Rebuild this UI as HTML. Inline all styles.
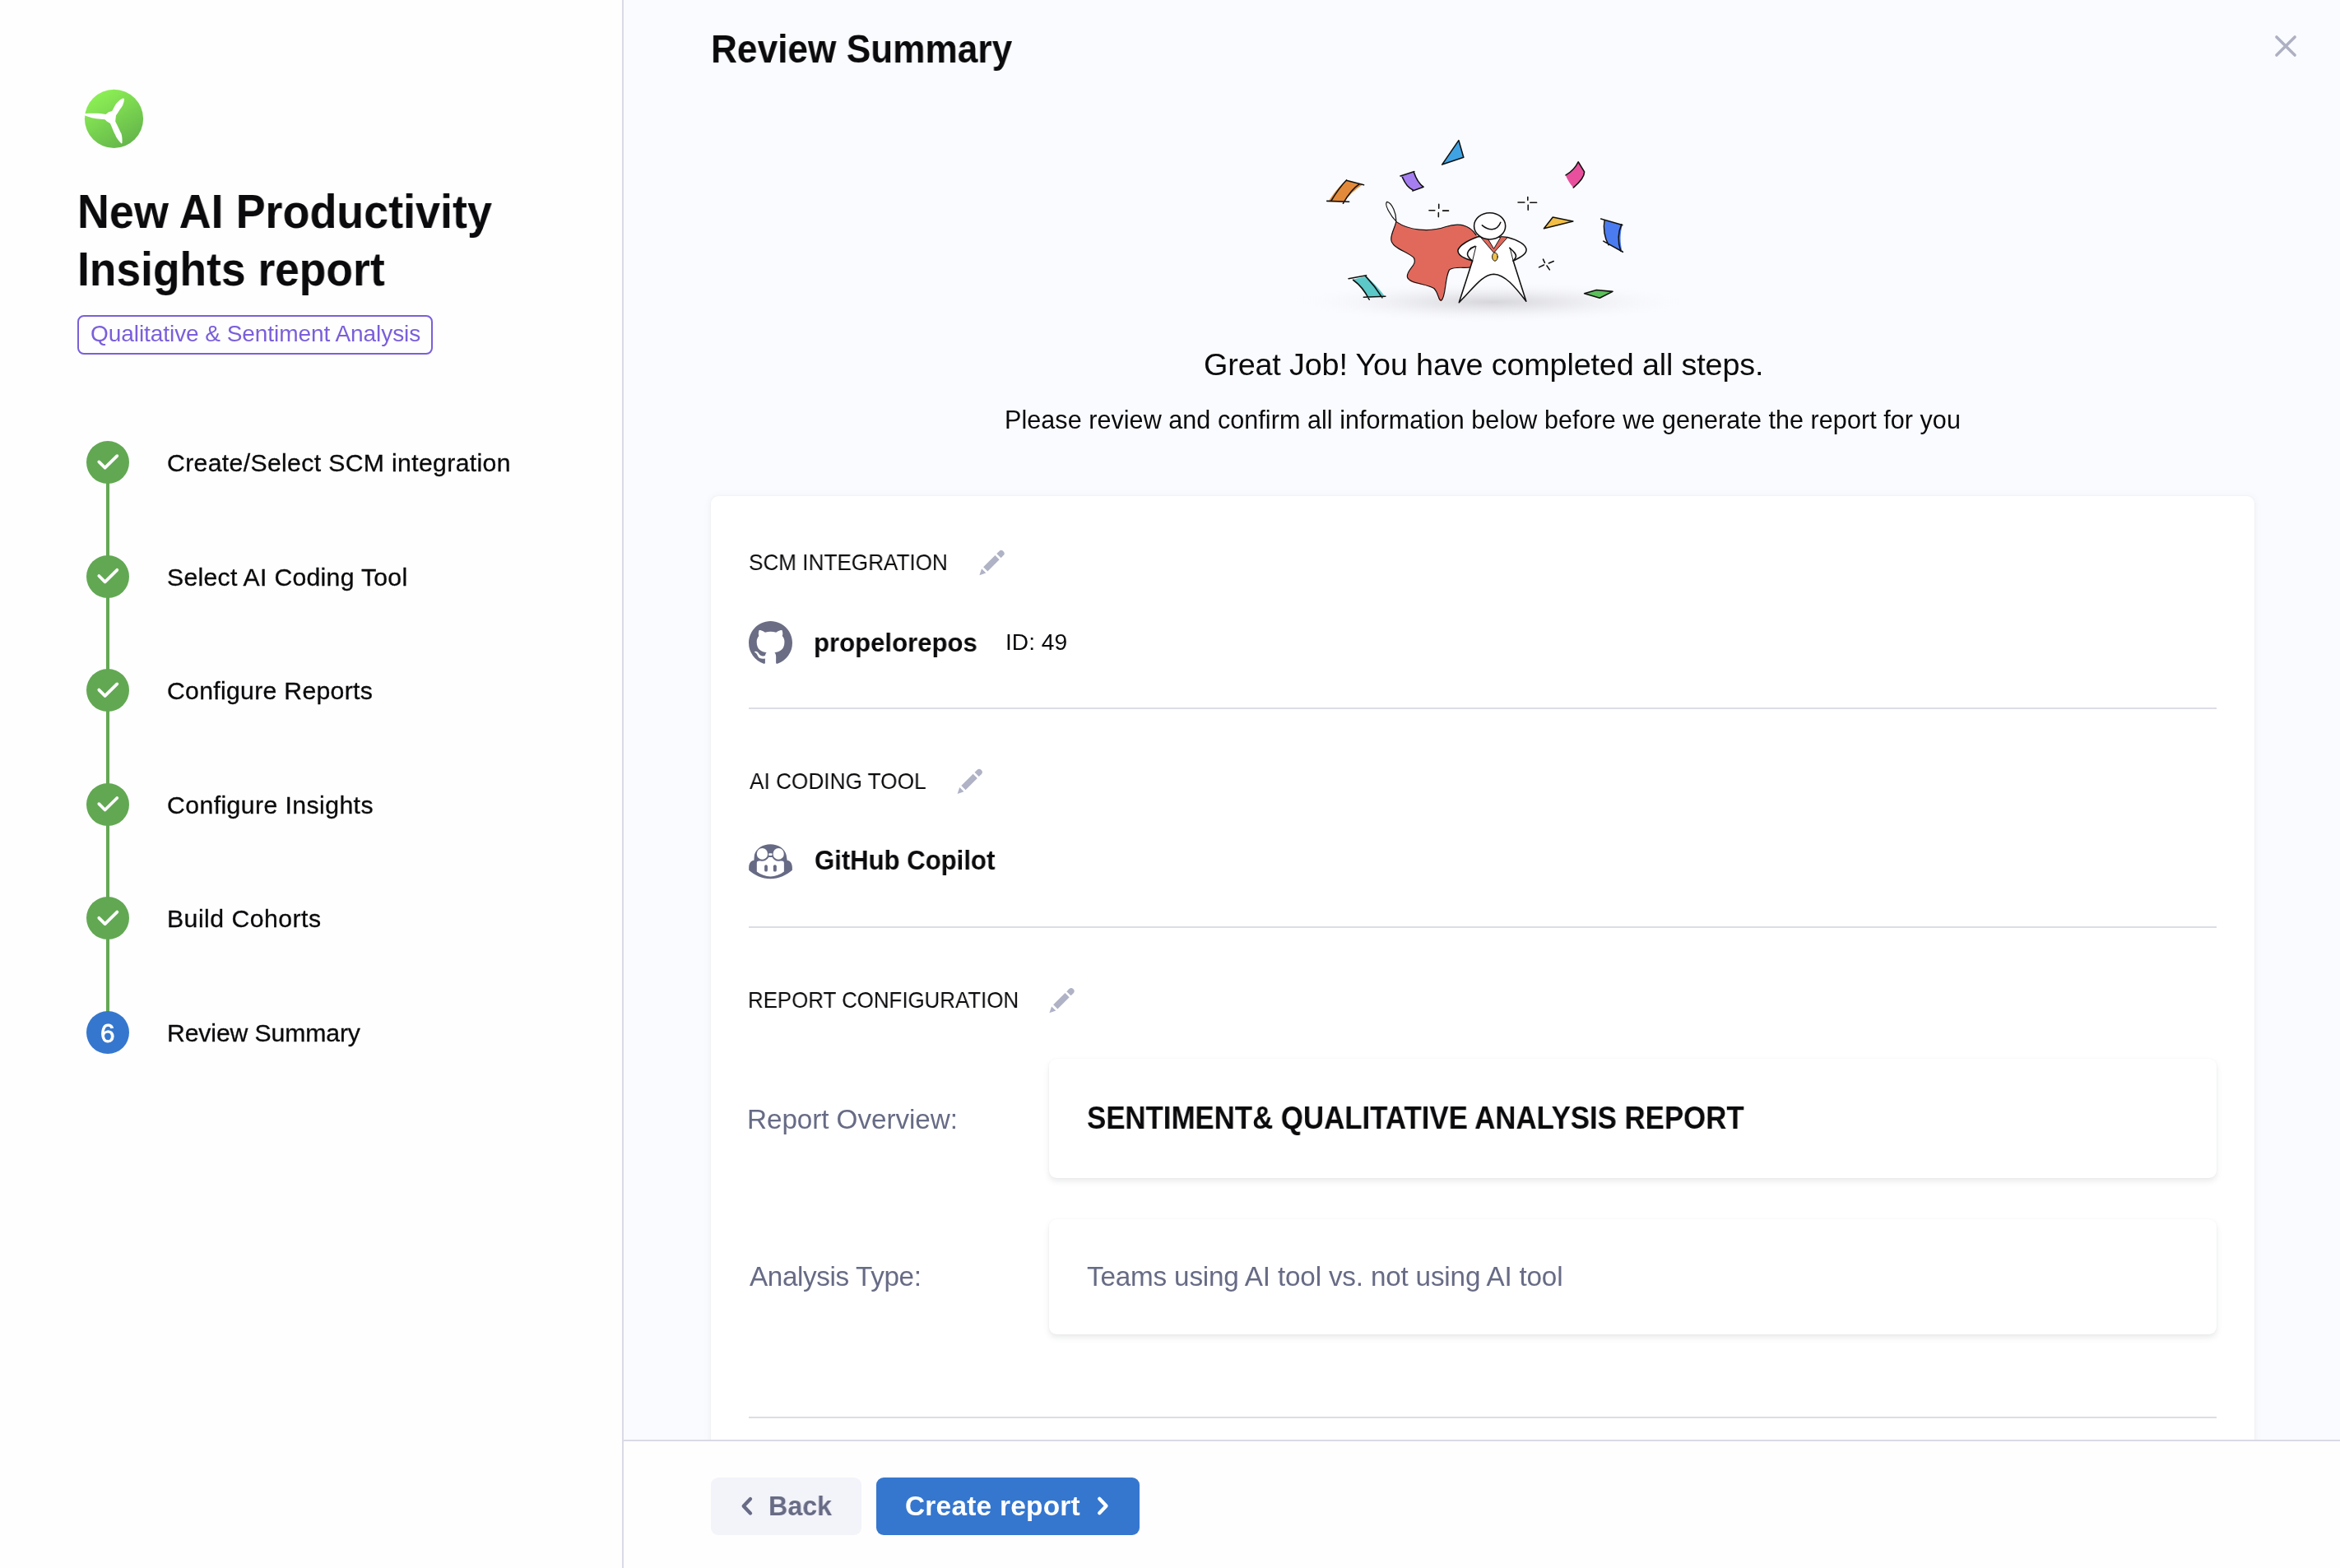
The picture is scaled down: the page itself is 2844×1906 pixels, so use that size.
<!DOCTYPE html>
<html><head><meta charset="utf-8">
<style>
*{margin:0;padding:0;box-sizing:border-box}
html,body{width:2844px;height:1906px;overflow:hidden;background:#fafbfe;font-family:"Liberation Sans",sans-serif;color:#0b0b0d}
.a{position:absolute;white-space:nowrap;line-height:1;will-change:transform}
svg{position:absolute;overflow:visible}
#left{position:absolute;left:0;top:0;width:756px;height:1906px;background:#fefefe}
#divider{position:absolute;left:756px;top:0;width:2px;height:1906px;background:#d9dae5}
.sc{position:absolute;left:105px;width:52px;height:52px;border-radius:50%;background:#62a853}
.sl{position:absolute;left:129px;width:4px;background:#62a853}
.st{font-size:30.2px;left:202.8px;color:#0b0b0d;-webkit-text-stroke:0.3px #0b0b0d}
.card{position:absolute;left:864px;top:603px;width:1876px;height:1300px;background:#fff;border-radius:9px;box-shadow:0 0 2px rgba(40,41,61,.05),0 1px 10px rgba(96,97,112,.09)}
.hr{position:absolute;left:910px;width:1784px;height:2px;background:#dcdde6}
.sec{font-size:28.34px;color:#0b0b0d}
.box{position:absolute;left:1275px;width:1419px;background:#fff;border-radius:9px;box-shadow:0 0 2px rgba(40,41,61,.05),0 4px 7px rgba(96,97,112,.13)}
.gray{color:#676b85}
#footer{position:absolute;left:758px;top:1750px;width:2086px;height:157px;background:#fefefe;border-top:2px solid #d9dae5}
.btn{position:absolute;top:1796px;height:70px;border-radius:9px}
@media (max-width:2000px){html{zoom:0.5}}
</style></head>
<body>
<div id="left"></div>
<div id="divider"></div>

<!-- logo -->
<svg style="left:100px;top:100px" width="80" height="90" viewBox="0 0 80 90">
<defs><linearGradient id="lg" x1="0.2" y1="0" x2="0.8" y2="1"><stop offset="0" stop-color="#8ff455"/><stop offset="1" stop-color="#62b24a"/></linearGradient></defs>
<circle cx="38.5" cy="44.4" r="35.6" fill="url(#lg)"/>
<path fill="#fff" d="M28.4,39 C24,37.8 15,37.4 3.2,38 L2.9,40.2 C8,42.3 14,43.9 17.2,44.2 L27.5,45.3 L29.8,47.6 L33.9,49.9 C36,54 38,60 40.2,64.3 C41.5,67.5 43.6,70.6 47.6,74.6 L48.5,74 C48.6,71 48.6,68 48.2,66 C47.8,63 47.2,61.8 46.5,60.8 L43.6,54.5 L40.2,47.6 L41,40.2 C42.5,38.5 44,35.5 44.8,34.4 C46.5,32 48,30 48.8,28.7 C50,26 50.8,24 51.1,20.1 L49.4,19.5 C47,20.5 45,22 44.2,23 C42.5,24.5 41,26 40.2,27.5 L36.2,35 L32.1,36.2 Z"/>
</svg>

<div class="a" style="left:93.5px;top:230px;font-size:56.83px;font-weight:bold;transform:scaleX(0.948);transform-origin:0 0">New AI Productivity</div>
<div class="a" style="left:93.5px;top:300px;font-size:56.83px;font-weight:bold;transform:scaleX(0.939);transform-origin:0 0">Insights report</div>

<div class="a" style="left:94px;top:383px;width:431.5px;height:47.5px;border:2px solid #7a5fda;border-radius:8px"></div>
<div class="a" style="left:109.6px;top:392.3px;font-size:28.05px;letter-spacing:-0.08px;color:#7a5fda">Qualitative &amp; Sentiment Analysis</div>

<!-- steps -->
<div class="sl" style="top:586px;height:92px"></div>
<div class="sl" style="top:725px;height:92px"></div>
<div class="sl" style="top:863px;height:92px"></div>
<div class="sl" style="top:1002px;height:92px"></div>
<div class="sl" style="top:1141px;height:92px"></div>
<div class="sc" style="top:536px"></div>
<div class="sc" style="top:674.6px"></div>
<div class="sc" style="top:813.2px"></div>
<div class="sc" style="top:951.8px"></div>
<div class="sc" style="top:1090.4px"></div>
<div class="sc" style="top:1229px;background:#3577ce"></div>
<svg style="left:105px;top:536px" width="52" height="700" viewBox="0 0 52 700">
<g fill="none" stroke="#fff" stroke-width="3.8" stroke-linecap="round" stroke-linejoin="round">
<path d="M15.3,25.4 L22.6,32.7 L37.3,18.2"/>
<path transform="translate(0,138.6)" d="M15.3,25.4 L22.6,32.7 L37.3,18.2"/>
<path transform="translate(0,277.2)" d="M15.3,25.4 L22.6,32.7 L37.3,18.2"/>
<path transform="translate(0,415.8)" d="M15.3,25.4 L22.6,32.7 L37.3,18.2"/>
<path transform="translate(0,554.4)" d="M15.3,25.4 L22.6,32.7 L37.3,18.2"/>
</g></svg>
<div class="a" style="left:121.8px;top:1241.2px;font-size:31.5px;color:#fff;-webkit-text-stroke:0.8px #fff">6</div>

<div class="a st" style="top:548px;letter-spacing:0.35px">Create/Select SCM integration</div>
<div class="a st" style="top:686.6px;letter-spacing:0.285px">Select AI Coding Tool</div>
<div class="a st" style="top:825.2px;letter-spacing:0.3px">Configure Reports</div>
<div class="a st" style="top:963.8px;letter-spacing:0.424px">Configure Insights</div>
<div class="a st" style="top:1102.4px;letter-spacing:0.483px">Build Cohorts</div>
<div class="a st" style="top:1241px;letter-spacing:-0.123px">Review Summary</div>

<!-- right header -->
<div class="a" style="left:864px;top:35.8px;font-size:47.24px;font-weight:bold;transform:scaleX(0.936);transform-origin:0 0">Review Summary</div>
<svg style="left:2760px;top:38px" width="36" height="36" viewBox="0 0 36 36">
<path d="M6.9,6.9 L29.1,29.1 M29.1,6.9 L6.9,29.1" stroke="#aeb0c2" stroke-width="3.5" stroke-linecap="round"/>
</svg>

<svg style="left:1560px;top:150px" width="460" height="250" viewBox="0 0 2340 1272">
<defs><radialGradient id="shd" cx="0.5" cy="0.5" r="0.5"><stop offset="0" stop-color="#cdcdd2" stop-opacity="0.8"/><stop offset="0.35" stop-color="#d8d8dc" stop-opacity="0.5"/><stop offset="0.7" stop-color="#e8e8ec" stop-opacity="0.2"/><stop offset="1" stop-color="#f9fafd" stop-opacity="0"/></radialGradient></defs>
<ellipse cx="1290" cy="1105" rx="1250" ry="130" fill="url(#shd)"/>
<g stroke="#111" stroke-width="8" stroke-linecap="round" stroke-linejoin="round">
<!-- confetti -->
<path d="M280,478 C320,420 350,380 390,355 L490,378 C440,410 400,450 372,488 Z" fill="#e38a3a" stroke="none"/>
<path d="M268,480 L405,485 M295,478 C330,420 360,380 390,350 M388,352 L496,380 M368,495 C400,440 430,400 470,375" fill="none"/>
<path d="M725,325 L805,300 C820,340 840,380 865,395 L800,415 C770,390 745,360 725,325 Z" fill="#a57ef0" stroke="none"/>
<path d="M722,325 L808,298 M805,300 C820,345 840,375 865,393 L798,417 M735,333 C750,370 770,398 800,412" fill="none"/>
<path d="M1083,105 L1113,210 L980,255 Z" fill="#3fa3e3"/>
<path d="M1820,240 L1860,300 C1860,330 1840,360 1790,395 C1770,370 1750,340 1745,320 C1780,300 1805,275 1820,240 Z" fill="#e8509e" stroke="none"/>
<path d="M1745,320 C1780,300 1805,275 1822,238 L1860,300 C1860,335 1830,365 1792,397" fill="none"/>
<path d="M1665,580 L1790,605 L1610,650 Z" fill="#f2be45"/>
<path d="M1990,600 L2095,630 C2080,680 2080,740 2095,795 L2010,745 C1985,700 1980,650 1990,600 Z" fill="#4a7bf0" stroke="none"/>
<path d="M1962,590 L2095,628 M1978,728 L2098,795 M1985,600 C1975,650 1985,710 2010,752 M2090,625 C2065,680 2065,730 2085,790" fill="none"/>
<path d="M1860,1052 L1935,1030 L2035,1040 L1955,1080 Z" fill="#5bbf5a"/>
<path d="M430,965 L510,945 C560,990 600,1030 625,1070 L525,1075 C500,1030 470,1000 430,965 Z" fill="#5cc8c8" stroke="none"/>
<path d="M402,960 L512,940 M495,1075 L630,1070 M430,968 C475,1000 505,1040 530,1090 M505,942 C550,990 580,1030 610,1078" fill="none"/>
<!-- sparkles -->
<path d="M900,538 H935 M985,540 H1020 M960,500 V525 M958,552 V578" fill="none"/>
<path d="M1450,488 H1490 M1525,490 H1565 M1510,455 V475 M1512,505 V535" fill="none"/>
<path d="M1580,890 L1610,875 M1640,865 L1670,852 M1605,840 L1615,862 M1628,880 L1645,905" fill="none"/>
<!-- cape -->
<path d="M1200,700 C1160,630 1100,610 1000,640 C900,670 780,665 695,605 C690,640 660,680 665,720 C670,770 760,790 805,830 C830,880 760,900 765,955 C780,1000 890,990 935,1025 C965,1055 950,1100 975,1100 C1005,1080 990,960 1030,905 C1070,880 1140,900 1168,885 Z" fill="#e0695c" stroke="none"/>
<path d="M1190,690 C1150,630 1090,610 1000,640 C900,675 770,660 700,610 C660,570 620,500 640,485 C670,490 700,560 695,610 C690,640 665,680 665,715 C665,770 760,790 805,830 C830,880 760,900 765,950 C775,990 880,990 930,1020 C960,1050 955,1095 975,1095 C1005,1075 995,960 1025,905 C1060,880 1130,900 1165,888" fill="none" stroke-width="6"/>
<!-- figure -->
<path d="M1205,700 C1150,720 1090,750 1078,785 C1075,820 1130,840 1168,850 L1085,1108 C1180,1010 1230,935 1300,932 C1370,935 1430,1010 1500,1100 L1420,850 C1450,835 1510,810 1500,775 C1490,740 1440,720 1385,705 Z" fill="#fff"/>
<path d="M1185,760 C1150,770 1130,800 1140,820 C1150,840 1160,845 1168,850 M1398,770 C1420,790 1445,810 1435,830 C1430,840 1425,845 1420,850" fill="none"/>
<path d="M1168,850 L1190,760 M1420,850 L1400,770" fill="none" stroke-width="5"/>
<path d="M1215,700 L1300,800 L1385,705 L1345,700 L1300,775 L1255,700 Z" fill="#e0695c" stroke-width="5"/>
<ellipse cx="1307" cy="825" rx="17" ry="26" fill="#f0c04a" stroke-width="5"/>
<ellipse cx="1275" cy="635" rx="97" ry="82" fill="#fff"/>
<path d="M1228,630 C1265,662 1320,670 1342,612" fill="none"/>
</g>
</svg>

<div class="a" style="left:1462.7px;top:424.9px;font-size:37.79px;letter-spacing:-0.16px">Great Job! You have completed all steps.</div>
<div class="a" style="left:1221.4px;top:495.1px;font-size:30.52px;letter-spacing:0.06px">Please review and confirm all information below before we generate the report for you</div>

<div class="card"></div>

<svg style="left:0;top:0" width="2844" height="1906" viewBox="0 0 2844 1906">

<g fill="#b0b2c6" transform="translate(1190.4,699.2) rotate(-45)"><path d="M0,0 L7.5,-3.7 L7.5,3.7 Z"/><path d="M10.4,-3.7 H30.6 V3.7 H10.4 Z"/><path d="M33.3,-3.7 H37.4 A3.7,3.7 0 0 1 37.4,3.7 H33.3 Z"/></g>
<g fill="#b0b2c6" transform="translate(1163.6,965) rotate(-45)"><path d="M0,0 L7.5,-3.7 L7.5,3.7 Z"/><path d="M10.4,-3.7 H30.6 V3.7 H10.4 Z"/><path d="M33.3,-3.7 H37.4 A3.7,3.7 0 0 1 37.4,3.7 H33.3 Z"/></g>
<g fill="#b0b2c6" transform="translate(1275.4,1231.3) rotate(-45)"><path d="M0,0 L7.5,-3.7 L7.5,3.7 Z"/><path d="M10.4,-3.7 H30.6 V3.7 H10.4 Z"/><path d="M33.3,-3.7 H37.4 A3.7,3.7 0 0 1 37.4,3.7 H33.3 Z"/></g>
</svg>

<div class="a sec" style="left:910.3px;top:668.8px;transform:scaleX(0.922);transform-origin:0 0">SCM INTEGRATION</div>
<svg style="left:910px;top:755.2px" width="53" height="53" viewBox="0 0 16 16">
<path fill="#6b6d85" d="M8 0c4.42 0 8 3.58 8 8a8.013 8.013 0 0 1-5.45 7.59c-.4.08-.55-.17-.55-.38 0-.27.01-1.13.01-2.2 0-.75-.25-1.23-.54-1.48 1.78-.2 3.650-.88 3.65-3.95 0-.88-.31-1.59-.82-2.15.08-.2.36-1.02-.08-2.12 0 0-.67-.22-2.2.82-.64-.18-1.32-.27-2-.27-.68 0-1.36.09-2 .27-1.530-1.030-2.2-.82-2.2-.82-.44 1.1-.16 1.92-.08 2.12-.51.56-.82 1.28-.82 2.15 0 3.06 1.86 3.75 3.64 3.95-.23.2-.44.55-.51 1.07-.46.21-1.61.55-2.33-.66-.15-.24-.6-.83-1.23-.82-.67.01-.27.38.01.53.34.19.73.9.82 1.13.16.45.68 1.31 2.69.94 0 .67.01 1.3.01 1.49 0 .21-.15.45-.55.38A7.995 7.995 0 0 1 0 8c0-4.42 3.58-8 8-8Z"/>
</svg>
<div class="a" style="left:989.2px;top:764.7px;font-size:31.98px;font-weight:bold;transform:scaleX(0.973);transform-origin:0 0">propelorepos</div>
<div class="a" style="left:1221.9px;top:765.9px;font-size:28.2px">ID: 49</div>
<div class="hr" style="top:860px"></div>

<div class="a sec" style="left:911px;top:934.8px;transform:scaleX(0.925);transform-origin:0 0">AI CODING TOOL</div>
<svg style="left:905px;top:1020px" width="65" height="54" viewBox="0 0 1887 1568">
<path fill="#676a84" d="M910,178 C1180,178 1420,330 1470,560 L1500,745 C1600,745 1680,850 1680,1000 L1680,1095 C1500,1260 1200,1400 910,1400 C620,1400 320,1260 150,1095 L150,1000 C150,850 230,745 330,745 L345,560 C400,330 640,178 910,178 Z"/>
<path fill="#fff" d="M430,840 C430,795 460,770 510,770 L560,770 A258,258 0 0 0 850,642 L975,642 A258,258 0 0 0 1262,770 L1310,770 C1360,770 1390,795 1390,840 L1390,1150 C1250,1260 1080,1320 910,1320 C740,1320 570,1260 430,1150 Z"/>
<ellipse fill="#fff" cx="622" cy="522" rx="192" ry="200"/>
<ellipse fill="#fff" cx="1195" cy="522" rx="192" ry="200"/>
<rect fill="#fff" x="848" y="500" width="125" height="78" rx="20"/>
<rect fill="#676a84" x="700" y="910" width="110" height="240" rx="55"/>
<rect fill="#676a84" x="1012" y="910" width="115" height="240" rx="55"/>
</svg>
<div class="a" style="left:989.9px;top:1030px;font-size:32.85px;font-weight:bold;transform:scaleX(0.947);transform-origin:0 0">GitHub Copilot</div>
<div class="hr" style="top:1126px"></div>

<div class="a sec" style="left:909px;top:1200.8px;transform:scaleX(0.913);transform-origin:0 0">REPORT CONFIGURATION</div>

<div class="box" style="top:1287px;height:145px"></div>
<div class="box" style="top:1481.7px;height:140.8px"></div>
<div class="a gray" style="left:907.8px;top:1343.8px;font-size:33.28px;letter-spacing:-0.07px">Report Overview:</div>
<div class="a" style="left:1321.4px;top:1340px;font-size:38.08px;font-weight:bold;transform:scaleX(0.914);transform-origin:0 0">SENTIMENT&amp; QUALITATIVE ANALYSIS REPORT</div>
<div class="a gray" style="left:910.8px;top:1534.6px;font-size:33.28px;letter-spacing:-0.38px">Analysis Type:</div>
<div class="a gray" style="left:1321.4px;top:1534.8px;font-size:33.28px;letter-spacing:-0.19px">Teams using AI tool vs. not using AI tool</div>
<div class="hr" style="top:1722px"></div>

<div id="footer"></div>
<div class="btn" style="left:864px;width:183px;background:#f3f3fa"></div>
<div class="btn" style="left:1065px;width:320px;background:#3577cf"></div>
<svg style="left:880px;top:1800px" width="60" height="60" viewBox="0 0 60 60">
<path d="M32,22 L23.7,30.75 L32,39.5" fill="none" stroke="#676b85" stroke-width="4.3" stroke-linecap="round" stroke-linejoin="round"/>
</svg>
<div class="a gray" style="left:934px;top:1813.6px;font-size:33.43px;font-weight:bold;transform:scaleX(0.964);transform-origin:0 0">Back</div>
<div class="a" style="left:1100.1px;top:1813.7px;font-size:33.43px;font-weight:bold;letter-spacing:0.23px;color:#fff">Create report</div>
<svg style="left:1300px;top:1800px" width="60" height="60" viewBox="0 0 60 60">
<path d="M36.2,21.7 L44.5,30.5 L36.2,39.3" fill="none" stroke="#fff" stroke-width="4.3" stroke-linecap="round" stroke-linejoin="round"/>
</svg>

</body></html>
